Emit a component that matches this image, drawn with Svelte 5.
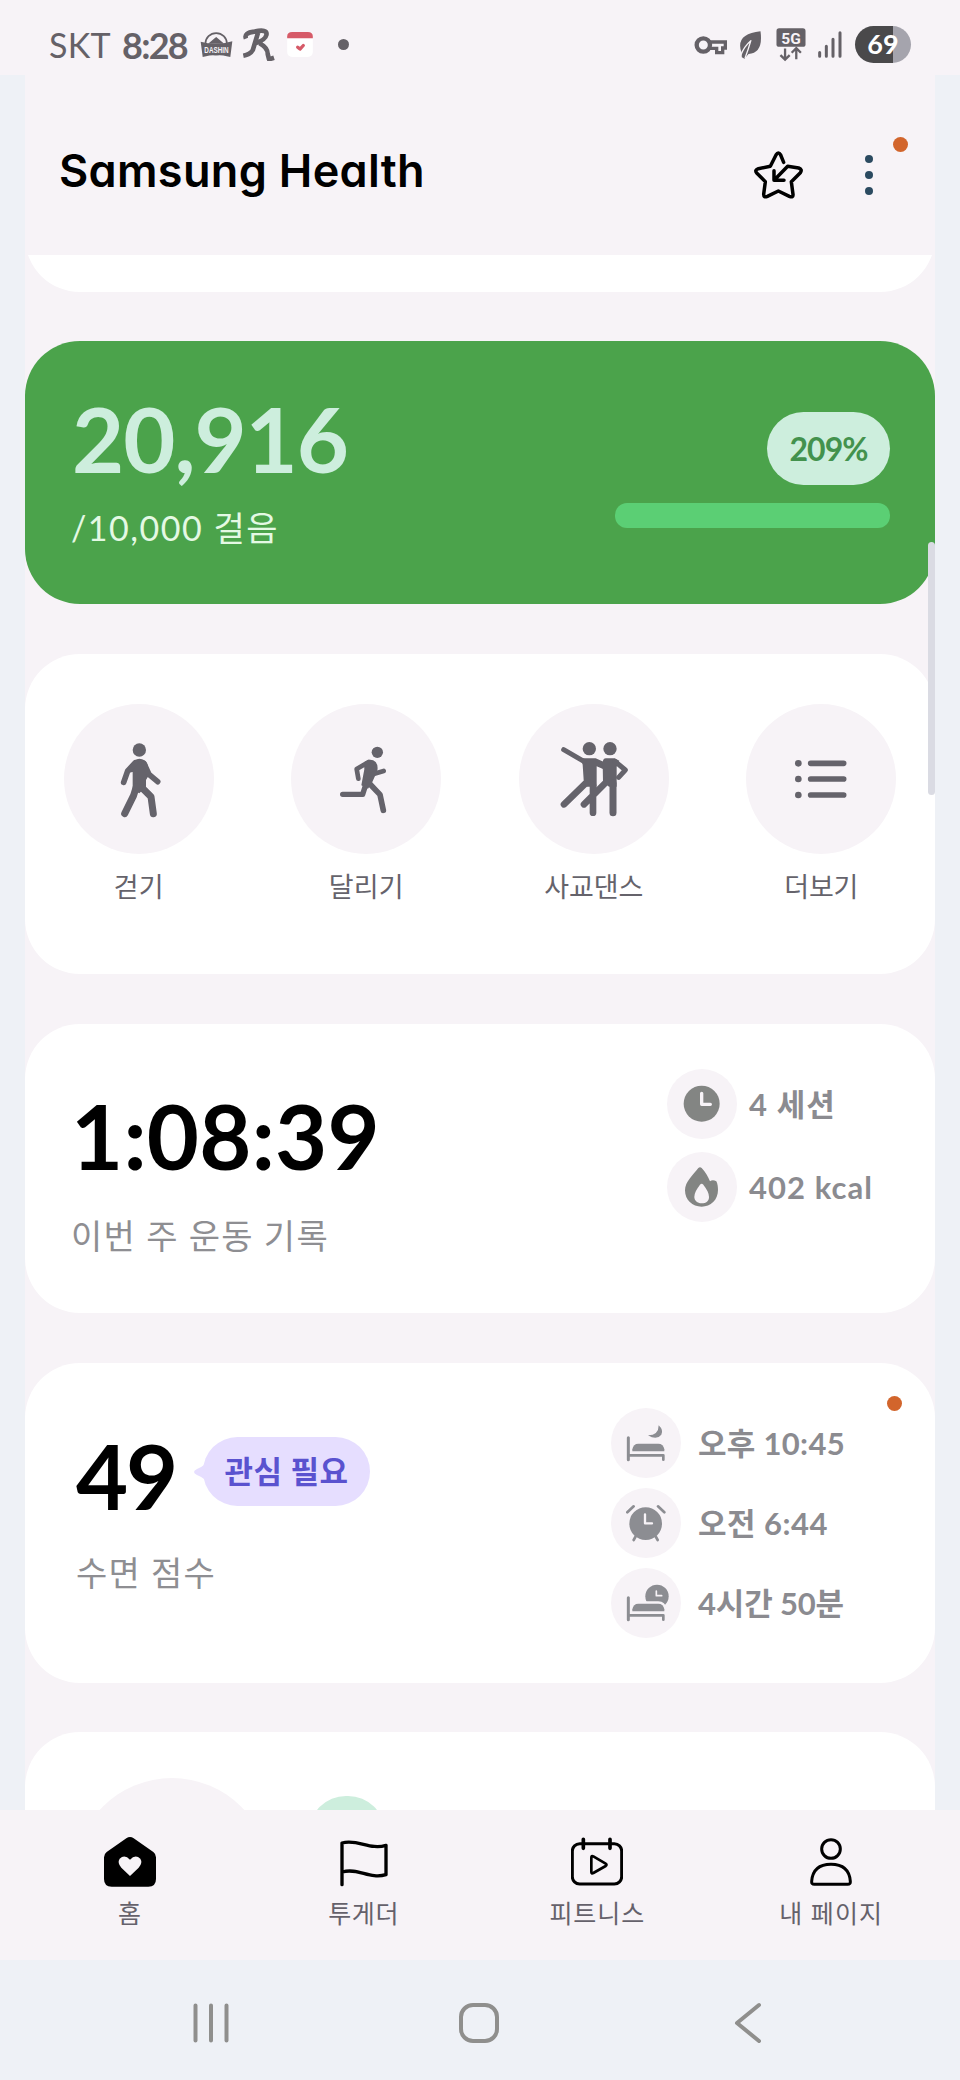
<script>
  // Spreads a line of text over a given width by adjusting its tracking.
  function spread(node, width) {
    const count = [...node.textContent].length;
    const natural = node.getBoundingClientRect().width;
    node.style.letterSpacing = `${(width - natural) / count}px`;
  }

  const shortcuts = [
    { id: 'walk', label: '걷기', box: '190 192 450 450', w: 50 },
    { id: 'run', label: '달리기', box: '873 192 450 450', w: 75 },
    { id: 'dance', label: '사교댄스', box: '115 192 450 450', w: 99 },
    { id: 'more', label: '더보기', box: '798 192 450 450', w: 74 }
  ];

  const exercise = [
    { id: 'clock', label: '4 세션', box: '561 179 210 210', w: 87 },
    { id: 'flame', label: '402 kcal', box: '561 426 210 210', w: 124 }
  ];

  const sleep = [
    { id: 'bed', label: '오후 10:45', box: '393 174 210 210', w: 147 },
    { id: 'alarm', label: '오전 6:44', box: '393 414 210 210', w: 130 },
    { id: 'bedclock', label: '4시간 50분', box: '393 174 210 210', w: 146 }
  ];

  const tabs = [
    { id: 'home', label: '홈', box: '309 350 156 150', w: 24 },
    { id: 'flag', label: '투게더', box: '1015 350 156 150', w: 71 },
    { id: 'calendar', label: '피트니스', box: '272 350 156 150', w: 96 },
    { id: 'person', label: '내 페이지', box: '973 350 156 150', w: 104 }
  ];
</script>

{#snippet bed()}
  <path class="line" stroke-width="9" d="M445 263V329" />
  <path class="line" stroke-width="8" d="M445 316H550V329" />
  <path class="mattress" d="M457 304V298Q460 281 475 281H535Q550 281 553 298V304Z" />
{/snippet}

{#snippet glyph(id)}
  {#if id === 'walk'}
    <circle cx="416" cy="330" r="20" />
    <path d="M394 372Q400 357 416 356Q434 357 440 372L447 402L436 420V440L416 460L396 450V396L384 398Z" />
    <path class="line" stroke-width="17" d="M404 368L381 393L369 427M430 370L445 403L471 425" />
    <path class="line" stroke-width="21" d="M407 440L399 466L372 521M424 443L451 470L458 521" />
  {:else if id === 'run'}
    <circle cx="1132" cy="337" r="17" />
    <path d="M1092 367Q1112 352 1127 366Q1135 376 1132 392L1116 428L1104 446L1084 436L1093 388Z" />
    <path class="line" stroke-width="14" d="M1106 366L1070 387L1075 416M1118 403L1151 393" />
    <path class="line" stroke-width="16" d="M1100 425L1088 463L1028 463" />
    <path class="line" stroke-width="17" d="M1104 426L1140 464L1150 511" />
  {:else if id === 'dance'}
    <circle cx="326" cy="326" r="20" />
    <circle cx="388" cy="326" r="20" />
    <path d="M300 355H345L370 366L372 389L348 379V440H318L309 420L306 374Z" />
    <path d="M366 370Q366 355 376 355H402L416 362L408 380V440H385L367 425Z" />
    <path class="line" stroke-width="15" d="M249 329L311 365M403 364L434 390L414 412" />
    <path class="line" stroke-width="20" d="M320 425L250 493M337 435V518M383 420L310 493" />
    <path class="line" stroke-width="21" d="M397 430V518" />
  {:else if id === 'more'}
    <circle cx="955" cy="370" r="10" />
    <circle cx="955" cy="417" r="10" />
    <circle cx="955" cy="465" r="10" />
    <path class="line" stroke-width="17" d="M992 370H1091M992 417H1091M992 465H1091" />
  {:else if id === 'clock'}
    <circle cx="665" cy="283" r="54" />
    <path class="cut" stroke-width="10" d="M665 252V285H691" />
  {:else if id === 'flame'}
    <path d="M655 474Q660 469 665 474C676 485 684 500 690 514Q698 508 709 514C713 522 714 532 714 540C714 570 692 590 665 590C637 590 615 570 615 541C615 515 640 494 655 474Z" />
    <path class="hole" d="M660 524Q665 518 670 524C680 537 687 548 687 561C687 573 678 580 665 580C652 580 643 572 643 561C643 548 650 537 660 524Z" />
  {:else if id === 'bed'}
    {@render bed()}
    <path d="M536 226Q551 240 544 254Q530 272 504 256Q536 256 536 226Z" />
  {:else if id === 'alarm'}
    <circle cx="497" cy="521" r="49" />
    <path class="cut" stroke-width="7" d="M495 493V520H516" />
    <path class="line" stroke-width="8" d="M442 487L461 469M534 469L553 487M466 561L461 570M528 561L533 570" />
  {:else if id === 'bedclock'}
    <circle cx="531" cy="259" r="35" />
    <path class="cut" stroke-width="5" d="M529 243V257H545" />
    <path class="cut" stroke-width="14" d="M457 304V298Q460 281 475 281H535Q550 281 553 298V304Z" />
    {@render bed()}
  {:else if id === 'home'}
    <path d="M376 354Q387 346 398 354L457 395Q465 401 465 411V476Q465 499 442 499H332Q309 499 309 476V411Q309 401 317 395Z" />
    <path class="hole" d="M387 467L361 442Q348 427 356 415Q371 401 387 418Q403 401 418 415Q426 427 413 442Z" />
  {:else if id === 'flag'}
    <path class="line" stroke-width="10" d="M1027 493V368C1075 355 1110 390 1159 375V463C1110 478 1075 441 1028 455" />
  {:else if id === 'calendar'}
    <rect class="line" stroke-width="9" x="276" y="370" width="148" height="121" rx="22" />
    <path class="line" stroke-width="11" d="M309 357V384M389 357V384" />
    <path class="line" stroke-width="8" d="M333 412Q333 405 339 408L376 430Q381 433 376 437L339 458Q333 461 333 455Z" />
  {:else if id === 'person'}
    <circle class="line" stroke-width="9" cx="1051" cy="386" r="28" />
    <path class="line" stroke-width="9" d="M1001 492H1101Q1110 492 1109 483Q1105 432 1051 432Q997 432 993 483Q992 492 1001 492Z" />
  {/if}
{/snippet}

<div class="screen">
  <header class="status">
    <span class="carrier"><span use:spread={62}>SKT</span></span>
    <span class="time"><span use:spread={65}>8:28</span></span>
    <svg class="dashin" viewBox="600 90 98 80" width="33" height="27">
      <circle cx="648" cy="128" r="32" fill="none" stroke="currentColor" stroke-width="5" />
      <path d="M624 128L648 108L672 128Z" fill="currentColor" />
      <path d="M602 122Q648 134 696 120L690 167Q648 156 608 167Z" fill="currentColor" />
      <text x="649" y="156" text-anchor="middle" textLength="72" lengthAdjust="spacingAndGlyphs">DASHIN</text>
    </svg>
    <svg class="runner" viewBox="722 84 106 100" width="35" height="33">
      <path d="M737 116Q730 99 762 95Q803 86 799 105Q796 121 763 131M774 97L758 150Q750 164 729 168M778 130Q803 143 803 163L807 179L822 174" fill="none" stroke="currentColor" stroke-width="14" stroke-linejoin="round" />
    </svg>
    <svg class="event" viewBox="861 96 78 76" width="26" height="25">
      <rect x="861" y="96" width="78" height="76" rx="15" fill="#fff" />
      <path d="M861 115V110Q861 96 876 96H924Q939 96 939 110V115Z" fill="#d65a68" />
      <path d="M893 142L900 148L910 137" fill="none" stroke="#d65a68" stroke-width="10" stroke-linecap="round" stroke-linejoin="round" />
    </svg>
    <i class="pip"></i>
    <div class="system">
      <svg viewBox="643 104 102 60" width="34" height="20" class="key">
        <circle cx="671" cy="134" r="20" fill="none" stroke="currentColor" stroke-width="13" />
        <path d="M690 125H737V143H729V157H711V144H690" fill="none" stroke="currentColor" stroke-width="10" />
      </svg>
      <svg viewBox="780 92 68 84" width="23" height="28" class="leaf">
        <path d="M844 93Q853 158 808 161L796 175L788 171L787 157Q767 101 844 93Z" fill="currentColor" />
        <path d="M785 164Q795 138 815 121M798 172Q808 146 815 121" fill="none" stroke="#f7f3f7" stroke-width="4" stroke-linecap="round" />
      </svg>
      <svg viewBox="890 79 90 100" width="30" height="33" class="net">
        <rect x="891" y="80" width="88" height="56" rx="8" fill="currentColor" />
        <text x="935" y="126" text-anchor="middle">5G</text>
        <path d="M917 141V172M903 161L917 175L931 161M951 174V143M937 154L951 140L965 154" fill="none" stroke="currentColor" stroke-width="7" />
      </svg>
      <svg viewBox="1014 92 72 80" width="24" height="27" class="signal">
        <path d="M1019 156V167M1039 137V167M1059 116V167M1080 97V167" stroke="currentColor" stroke-width="9" stroke-linecap="round" />
      </svg>
      <span class="battery">69</span>
    </div>
  </header>

  <main>
    <div class="top">
      <h1><span use:spread={366}>Samsung Health</span></h1>
      <svg class="star" viewBox="820 450 156 150" width="52" height="50">
        <path d="M912 487L903 465Q896 453 889 465L872 499L836 506Q824 510 831 519L857 545L852 583Q852 594 863 589L896 573L929 589Q941 594 940 583L935 545L962 518Q969 508 957 504L924 499L884 540M883 512V541H913" fill="none" stroke="#000" stroke-width="10.5" stroke-linecap="round" stroke-linejoin="round" />
      </svg>
      <div class="kebab"><i></i><i></i><i></i></div>
      <i class="alert"></i>
    </div>

    <div class="feed">
      <section class="card tail"></section>

      <section class="card steps">
        <div class="main">
          <div class="number"><span use:spread={276}>20,916</span></div>
          <div class="sub"><span use:spread={208}>/10,000 걸음</span></div>
        </div>
        <div class="progress">
          <div class="percent"><span use:spread={78}>209%</span></div>
          <div class="bar"></div>
        </div>
      </section>

      <section class="card shortcuts">
        {#each shortcuts as s}
          <div class="shortcut">
            <svg class="glyph" viewBox={s.box} width="150" height="150">{@render glyph(s.id)}</svg>
            <div class="caption"><span use:spread={s.w}>{s.label}</span></div>
          </div>
        {/each}
      </section>

      <section class="card exercise">
        <div class="main">
          <div class="number"><span use:spread={309}>1:08:39</span></div>
          <div class="sub"><span use:spread={258}>이번 주 운동 기록</span></div>
        </div>
        <div class="details">
          {#each exercise as d}
            <div class="detail">
              <svg class="glyph" viewBox={d.box} width="70" height="70">{@render glyph(d.id)}</svg>
              <div class="value"><span use:spread={d.w}>{d.label}</span></div>
            </div>
          {/each}
        </div>
      </section>

      <section class="card sleep">
        <div class="main">
          <div class="score">
            <div class="number"><span use:spread={100}>49</span></div>
            <div class="badge">
              <svg viewBox="0 0 14 24" width="14" height="24"><path d="M14 0Q11 6 3 9Q-3 12 3 15Q11 18 14 24Z" fill="#e6deff" /></svg>
              <div class="bubble"><span use:spread={124}>관심 필요</span></div>
            </div>
          </div>
          <div class="sub"><span use:spread={140}>수면 점수</span></div>
        </div>
        <div class="details">
          {#each sleep as d}
            <div class="detail">
              <svg class="glyph" viewBox={d.box} width="70" height="70">{@render glyph(d.id)}</svg>
              <div class="value"><span use:spread={d.w}>{d.label}</span></div>
            </div>
          {/each}
        </div>
        <i class="alert"></i>
      </section>

      <section class="card next">
        <div class="disc"></div>
        <div class="chip"></div>
      </section>
    </div>
    <i class="thumb"></i>
  </main>

  <nav class="tabs">
    {#each tabs as t}
      <div class="tab">
        <svg viewBox={t.box} width="52" height="50">{@render glyph(t.id)}</svg>
        <div class="caption"><span use:spread={t.w}>{t.label}</span></div>
      </div>
    {/each}
  </nav>

  <footer class="keys">
    <svg viewBox="0 0 40 44" width="40" height="44"><path d="M4.500 4.500V39.500M20 4.500V39.500M35.500 4.500V39.500" /></svg>
    <svg class="home-key" viewBox="0 0 44 44" width="44" height="44"><rect x="4" y="4" width="36" height="36" rx="12" /></svg>
    <svg viewBox="0 0 32 44" width="32" height="44"><path d="M27 4L5 22L27 40" /></svg>
  </footer>
</div>

<style>
  :global(body) {
    background: #eef1f6;
  }
  .screen {
    width: 960px;
    height: 2080px;
    display: flex;
    flex-direction: column;
    overflow: hidden;
    background: #eef1f6;
    font-family: Lato, 'Noto Sans CJK KR', sans-serif;
    color: #000;
  }
  span {
    display: inline-block;
    white-space: pre;
  }
  i {
    display: block;
    flex: none;
    border-radius: 50%;
  }
  svg {
    display: block;
    flex: none;
    fill: currentColor;
  }
  .line {
    fill: none;
    stroke: currentColor;
    stroke-linecap: round;
    stroke-linejoin: round;
  }
  .cut {
    fill: none;
    stroke: #f7f3f7;
    stroke-linecap: round;
    stroke-linejoin: round;
  }
  .hole {
    fill: #f7f3f7;
  }

  .status {
    flex: none;
    box-sizing: border-box;
    height: 75px;
    padding: 14px 49px 0 49px;
    display: flex;
    align-items: center;
    background: #f7f3f7;
    color: #656167;
  }
  .carrier {
    width: 73px;
    font-size: 34px;
    line-height: 34px;
  }
  .time {
    width: 78px;
    font-size: 36px;
    line-height: 36px;
    font-weight: 700;
  }
  .dashin {
    overflow: visible;
  }
  .dashin text {
    font: 700 28px 'Liberation Sans', sans-serif;
    fill: #f7f3f7;
  }
  .runner {
    margin-left: 8px;
  }
  .event {
    margin-left: 11px;
  }
  .pip {
    width: 11px;
    height: 11px;
    margin-left: 25px;
    background: #656167;
  }
  .system {
    margin-left: auto;
    display: flex;
    align-items: center;
  }
  .leaf {
    margin-left: 11px;
  }
  .net {
    margin-left: 14px;
    overflow: visible;
  }
  .net text {
    font: 700 47px Roboto, sans-serif;
    fill: #f7f3f7;
  }
  .signal {
    margin-left: 12px;
  }
  .battery {
    width: 56px;
    height: 37px;
    margin-left: 13px;
    border-radius: 19px;
    background: linear-gradient(90deg, #4a494b 68%, #a5a4ad 68%);
    color: #fff;
    font-size: 27px;
    font-weight: 700;
    line-height: 36px;
    text-align: center;
  }

  main {
    position: relative;
    flex: none;
    height: 1735px;
    margin: 0 25px;
    background: #f7f3f7;
    overflow: hidden;
  }
  .top {
    box-sizing: border-box;
    height: 180px;
    padding: 70px 27px 0 34px;
    display: flex;
    align-items: flex-start;
  }
  h1 {
    width: 694px;
    margin: -2px 0 0;
    font: 600 45px/56px Inter, sans-serif;
    font-feature-settings: 'cv11';
  }
  .star {
    margin-top: 5px;
  }
  .kebab {
    margin: 10px 0 0 60px;
    display: flex;
    flex-direction: column;
    gap: 8px;
  }
  .kebab i {
    width: 8px;
    height: 8px;
    background: #2b4a60;
  }
  .alert {
    width: 15px;
    height: 15px;
    background: #d2652c;
  }
  .top .alert {
    margin: -8px 0 0 20px;
  }

  .feed {
    display: flex;
    flex-direction: column;
    gap: 50px;
  }
  .card {
    box-sizing: border-box;
    flex: none;
    border-radius: 55px;
    background: #fff;
    display: flex;
    align-items: flex-start;
    justify-content: space-between;
  }
  .tail {
    height: 110px;
    margin-top: -73px;
    clip-path: inset(73px 0 0 0);
  }
  .number {
    font-size: 90px;
    font-weight: 700;
    line-height: 90px;
  }
  .sub {
    font-size: 34px;
    line-height: 40px;
    color: #8e8e92;
  }
  .steps {
    height: 263px;
    margin-top: -1px;
    padding: 52px 45px 0 46px;
    background: #4ba34b;
  }
  .steps .number {
    margin-left: 1px;
    color: #cdeedd;
  }
  .steps .sub {
    margin-top: 25px;
    color: #e4f9e4;
  }
  .progress {
    margin-top: 19px;
    width: 275px;
    display: flex;
    flex-direction: column;
    align-items: flex-end;
    gap: 18px;
  }
  .percent {
    width: 123px;
    height: 73px;
    border-radius: 37px;
    background: #cdeedd;
    color: #43924d;
    font-size: 32px;
    font-weight: 700;
    line-height: 74px;
    text-align: center;
  }
  .bar {
    width: 275px;
    height: 25px;
    border-radius: 12px;
    background: #5bcf74;
  }

  .shortcuts {
    height: 320px;
    padding: 50px 0 0 0;
    justify-content: center;
    color: #65636b;
  }
  .shortcut {
    width: 227.6px;
    display: flex;
    flex-direction: column;
    align-items: center;
  }
  .glyph {
    border-radius: 50%;
    background: #f7f3f7;
  }
  .shortcut .caption {
    margin-top: 17px;
    font-size: 27px;
    line-height: 32px;
  }

  .exercise {
    height: 289px;
    padding: 45px 0 0 46px;
  }
  .exercise .number {
    margin-top: 21px;
  }
  .exercise .sub {
    margin-top: 36px;
  }
  .details {
    display: flex;
    flex-direction: column;
    font-size: 31px;
    font-weight: 700;
  }
  .exercise .details {
    width: 268px;
    gap: 13px;
    color: #838583;
  }
  .detail {
    display: flex;
    align-items: center;
  }
  .value {
    margin-left: 12px;
    line-height: 40px;
    color: #8b8b90;
  }

  .sleep {
    position: relative;
    height: 320px;
    padding: 45px 0 0 51px;
  }
  .score {
    margin-top: 22px;
    display: flex;
    align-items: flex-start;
  }
  .badge {
    margin: 7px 0 0 18px;
    display: flex;
    align-items: center;
  }
  .bubble {
    width: 167px;
    height: 69px;
    margin-left: -5px;
    border-radius: 35px;
    background: #e6deff;
    color: #5a52cf;
    font-size: 31px;
    font-weight: 700;
    line-height: 68px;
    text-align: center;
  }
  .sleep .sub {
    margin-top: 33px;
  }
  .sleep .details {
    width: 324px;
    gap: 10px;
    color: #8c8d92;
  }
  .sleep .value {
    margin-left: 17px;
  }
  .sleep .alert {
    position: absolute;
    top: 33px;
    right: 33px;
  }

  .next {
    height: 200px;
    margin-top: -1px;
    padding: 46px 0 0 49px;
    justify-content: flex-start;
  }
  .disc {
    width: 196px;
    height: 196px;
    border-radius: 50%;
    background: #f7f3f7;
  }
  .chip {
    width: 76px;
    height: 74px;
    margin: 18px 0 0 39px;
    border-radius: 37px;
    background: #cdeedd;
  }
  .thumb {
    position: absolute;
    top: 467px;
    right: 0;
    width: 7px;
    height: 253px;
    border-radius: 4px;
    background: #dadbe3;
  }

  .tabs {
    flex: none;
    box-sizing: border-box;
    height: 150px;
    padding: 27px 12px 0 13px;
    display: flex;
    background: #f7f3f7;
  }
  .tab {
    flex: 1;
    display: flex;
    flex-direction: column;
    align-items: center;
  }
  .tab .caption {
    margin-top: 10px;
    font-size: 25px;
    line-height: 32px;
    color: #65616b;
  }

  .keys {
    flex: none;
    box-sizing: border-box;
    height: 120px;
    padding: 41px 196px 0 191px;
    display: flex;
    justify-content: space-between;
  }
  .keys svg {
    fill: none;
    stroke: #8f8f8d;
    stroke-width: 4;
    stroke-linecap: round;
    stroke-linejoin: round;
  }
  .keys .home-key {
    margin-right: 5px;
  }
</style>
